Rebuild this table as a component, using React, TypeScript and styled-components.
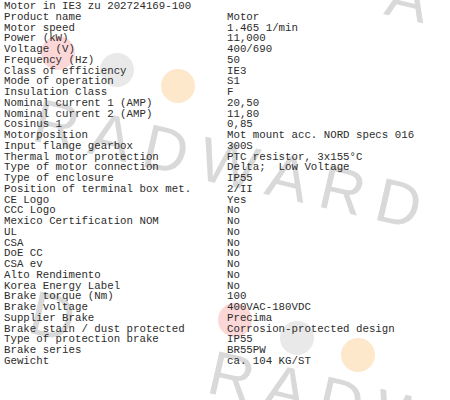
import React from 'react'
import styled, { createGlobalStyle } from 'styled-components'

const GlobalStyle = createGlobalStyle`
  html, body {
    margin: 0;
    padding: 0;
    background: #fff;
  }
`

const Sheet = styled.div`
  position: relative;
  width: 450px;
  height: 400px;
  overflow: hidden;
  background: #fff;
`

const Watermark = styled.svg`
  position: absolute;
  left: 0;
  top: 0;
  width: 450px;
  height: 400px;
  pointer-events: none;
`

const SpecTable = styled.div`
  position: relative;
  display: grid;
  grid-template-columns: 223px 1fr;
  padding: 1px 0 0 4px;
  font-family: 'Liberation Mono', 'Courier New', monospace;
  font-size: 10.75px;
  line-height: 10.76px;
  color: #2c2c2c;
`

const Cell = styled.div`
  white-space: pre;
  height: 10.76px;
`

const specs: [string, string][] = [
  ['Motor in IE3 zu 202724169-100', ''],
  ['Product name', 'Motor'],
  ['Motor speed', '1.465 1/min'],
  ['Power (kW)', '11,000'],
  ['Voltage (V)', '400/690'],
  ['Frequency (Hz)', '50'],
  ['Class of efficiency', 'IE3'],
  ['Mode of operation', 'S1'],
  ['Insulation Class', 'F'],
  ['Nominal current 1 (AMP)', '20,50'],
  ['Nominal current 2 (AMP)', '11,80'],
  ['Cosinus 1', '0,85'],
  ['Motorposition', 'Mot mount acc. NORD specs 016'],
  ['Input flange gearbox', '300S'],
  ['Thermal motor protection', 'PTC resistor, 3x155°C'],
  ['Type of motor connection', 'Delta;  Low Voltage'],
  ['Type of enclosure', 'IP55'],
  ['Position of terminal box met.', '2/II'],
  ['CE Logo', 'Yes'],
  ['CCC Logo', 'No'],
  ['Mexico Certification NOM', 'No'],
  ['UL', 'No'],
  ['CSA', 'No'],
  ['DoE CC', 'No'],
  ['CSA ev', 'No'],
  ['Alto Rendimento', 'No'],
  ['Korea Energy Label', 'No'],
  ['Brake torque (Nm)', '100'],
  ['Brake voltage', '400VAC-180VDC'],
  ['Supplier Brake', 'Precima'],
  ['Brake stain / dust protected', 'Corrosion-protected design'],
  ['Type of protection brake', 'IP55'],
  ['Brake series', 'BR55PW'],
  ['Gewicht', 'ca. 104 KG/ST'],
]

// watermark pieces: text, x, baseline y
const marks: [string, number, number][] = [
  ['A', 383, 14],
  ['RADWARD', 30, 140],
  ['D', 26, 332],
  ['RADWARD', 205, 392],
]

function Marks() {
  return (
    <Watermark viewBox="0 0 450 400">
      {marks.map(([t, x, y], i) => (
        <text
          key={i}
          x={x}
          y={y}
          transform={`rotate(13 ${x} ${y})`}
          fontFamily="Liberation Sans, Arial, sans-serif"
          fontSize={62}
          fill="#d9d9d9"
          letterSpacing={13}
        >
          {t}
        </text>
      ))}

      <circle cx="58" cy="53" r="17" fill="#fbd3d3" opacity="0.9" />
      <circle cx="117" cy="70" r="17" fill="#e9e9e9" />
      <circle cx="178" cy="86" r="17" fill="#fde8cb" />

      <circle cx="235" cy="320" r="17" fill="#fbd3d3" opacity="0.9" />
      <circle cx="297" cy="338" r="17" fill="#e9e9e9" />
      <circle cx="358" cy="355" r="17" fill="#fde8cb" />
    </Watermark>
  )
}

export default function App() {
  return (
    <Sheet>
      <GlobalStyle />
      <Marks />
      <SpecTable>
        {specs.map(([label, value], i) => (
          <React.Fragment key={i}>
            <Cell>{label}</Cell>
            <Cell>{value}</Cell>
          </React.Fragment>
        ))}
      </SpecTable>
    </Sheet>
  )
}
